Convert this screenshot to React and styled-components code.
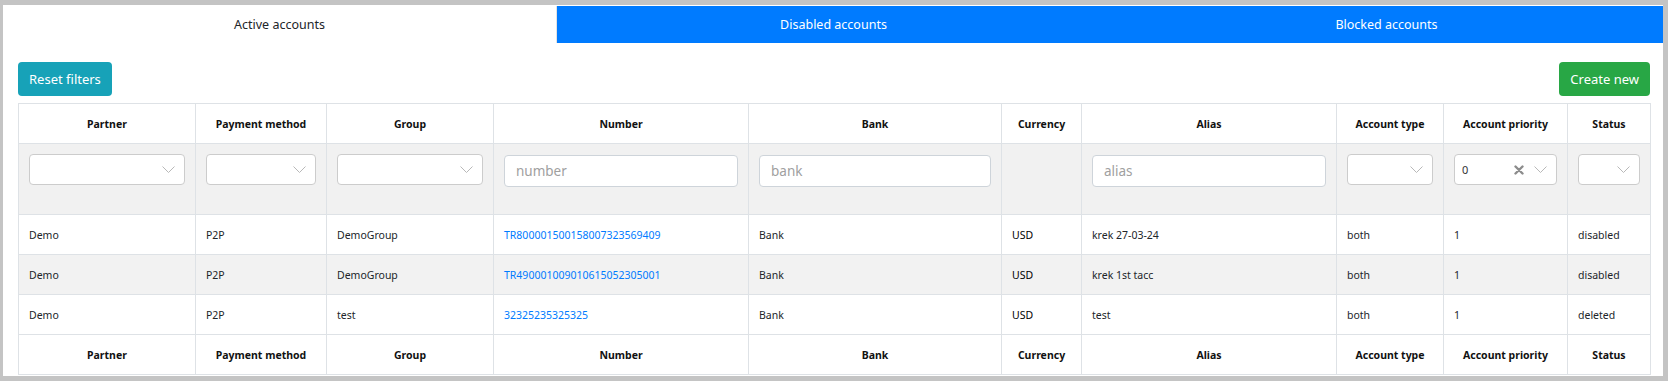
import React from "react";
import styled, { createGlobalStyle } from "styled-components";

const GlobalStyle = createGlobalStyle`
  html, body {
    margin: 0;
    padding: 0;
    background: #c4c4c4;
    font-family: "Noto Sans", "Open Sans", sans-serif;
    color: #212529;
  }
  * { box-sizing: border-box; }
`;

const columns = [
  { title: "Partner", width: 177, filter: "select" },
  { title: "Payment method", width: 131, filter: "select" },
  { title: "Group", width: 167, filter: "select" },
  { title: "Number", width: 255, filter: "input", placeholder: "number" },
  { title: "Bank", width: 253, filter: "input", placeholder: "bank" },
  { title: "Currency", width: 80, filter: null },
  { title: "Alias", width: 255, filter: "input", placeholder: "alias" },
  { title: "Account type", width: 107, filter: "select" },
  { title: "Account priority", width: 124, filter: "select", value: "0" },
  { title: "Status", width: 83, filter: "select" },
];

const rows = [
  ["Demo", "P2P", "DemoGroup", "TR800001500158007323569409", "Bank", "USD", "krek 27-03-24", "both", "1", "disabled"],
  ["Demo", "P2P", "DemoGroup", "TR490001009010615052305001", "Bank", "USD", "krek 1st tacc", "both", "1", "disabled"],
  ["Demo", "P2P", "test", "32325235325325", "Bank", "USD", "test", "both", "1", "deleted"],
];

const Chevron = () => (
  <svg width="13" height="7" viewBox="0 0 13 7">
    <polyline points="0.5,0.5 6.5,6.5 12.5,0.5" fill="none" stroke="#b8b8b8" strokeWidth="1" />
  </svg>
);

const ClearIcon = () => (
  <svg width="10" height="10" viewBox="0 0 10 10">
    <path d="M1.5 1.5 L8.5 8.5 M8.5 1.5 L1.5 8.5" stroke="#8c8c8c" strokeWidth="2.4" strokeLinecap="round" />
  </svg>
);

const App = () => {
  return (
    <>
      <GlobalStyle />
      <Page>
        <Panel>
          <TabBar>
            <Tab $active>Active accounts</Tab>
            <Tab>Disabled accounts</Tab>
            <Tab>Blocked accounts</Tab>
          </TabBar>
          <Content>
            <Toolbar>
              <Button $variant="info">Reset filters</Button>
              <Button $variant="success">Create new</Button>
            </Toolbar>
            <Table>
              <colgroup>
                {columns.map((c) => (
                  <col key={c.title} style={{ width: c.width }} />
                ))}
              </colgroup>
              <thead>
                <tr>
                  {columns.map((c) => (
                    <Th key={c.title}>{c.title}</Th>
                  ))}
                </tr>
                <FilterRow>
                  {columns.map((c) => (
                    <FilterCell key={c.title}>
                      {c.filter === "select" && (
                        <SelectBox>
                          <SelectValue>{c.value || ""}</SelectValue>
                          <Indicators>
                            {c.value && <ClearIcon />}
                            <Chevron />
                          </Indicators>
                        </SelectBox>
                      )}
                      {c.filter === "input" && <TextInput placeholder={c.placeholder} />}
                    </FilterCell>
                  ))}
                </FilterRow>
              </thead>
              <tbody>
                {rows.map((r, i) => (
                  <Row key={i} $striped={i % 2 === 1}>
                    {r.map((v, j) => (
                      <Td key={j} $dark={j === 5}>
                        {j === 3 ? <Link href="#">{v}</Link> : v}
                      </Td>
                    ))}
                  </Row>
                ))}
              </tbody>
              <tfoot>
                <tr>
                  {columns.map((c) => (
                    <Th key={c.title}>{c.title}</Th>
                  ))}
                </tr>
              </tfoot>
            </Table>
          </Content>
        </Panel>
      </Page>
    </>
  );
};

export default App;

const Page = styled.div`
  height: 100vh;
  padding: 5px 5px 5px 3px;
`;

const Panel = styled.div`
  height: 100%;
  background: #fff;
  padding-top: 1px;
`;

const TabBar = styled.div`
  display: flex;
  height: 37px;
`;

const Tab = styled.div`
  flex: 1;
  display: flex;
  align-items: center;
  justify-content: center;
  font-size: 12.5px;
  background: ${(p) => (p.$active ? "#fff" : "#007bff")};
  color: ${(p) => (p.$active ? "#212529" : "#fff")};
  &:nth-child(2) {
    border-left: 1px solid #e3e3e3;
  }
`;

const Content = styled.div`
  padding: 19px 13px 0 15px;
`;

const Toolbar = styled.div`
  display: flex;
  justify-content: space-between;
  margin-bottom: 7px;
`;

const Button = styled.button`
  height: 34px;
  padding: 0 11px;
  border: none;
  border-radius: 4px;
  font-family: inherit;
  font-size: 13px;
  color: #fff;
  background: ${(p) => (p.$variant === "success" ? "#28a745" : "#17a2b8")};
`;

const Table = styled.table`
  width: 1632px;
  table-layout: fixed;
  border-collapse: collapse;
  border: 1px solid #dee2e6;
  font-size: 10.5px;
`;

const Th = styled.th`
  height: 40px;
  padding: 0 10px;
  border: 1px solid #dee2e6;
  font-weight: 700;
  text-align: center;
  vertical-align: middle;
  color: #111;
  background: #fff;
`;

const FilterRow = styled.tr`
  background: #f1f1f1;
`;

const FilterCell = styled.td`
  height: 71px;
  padding: 10px 10px 0;
  border: 1px solid #dee2e6;
  vertical-align: top;
`;

const SelectBox = styled.div`
  display: flex;
  align-items: center;
  justify-content: space-between;
  height: 31px;
  padding: 0 9px 0 7px;
  background: #fff;
  border: 1px solid #cccccc;
  border-radius: 4px;
`;

const SelectValue = styled.span`
  font-size: 11px;
  color: #333;
`;

const Indicators = styled.div`
  display: flex;
  align-items: center;
  gap: 10px;
`;

const TextInput = styled.input`
  display: block;
  width: 100%;
  height: 32px;
  margin-top: 1px;
  padding: 0 11px;
  border: 1px solid #ced4da;
  border-radius: 4px;
  font-family: inherit;
  font-size: 13.5px;
  background: #fff;
  &::placeholder {
    color: #a0a0a0;
  }
`;

const Row = styled.tr`
  background: ${(p) => (p.$striped ? "#f2f2f2" : "#fff")};
`;

const Td = styled.td`
  height: 40px;
  padding: 0 10px;
  border: 1px solid #dee2e6;
  vertical-align: middle;
  color: ${(p) => (p.$dark ? "#000" : "#212529")};
  white-space: nowrap;
`;

const Link = styled.a`
  color: #007bff;
  text-decoration: none;
`;
